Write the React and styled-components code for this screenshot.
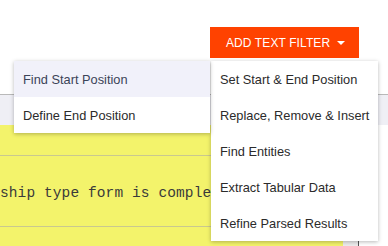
import React from "react";
import styled, { createGlobalStyle } from "styled-components";

const GlobalStyle = createGlobalStyle`
  html, body { margin: 0; padding: 0; background: #fff; }
  body { font-family: "Liberation Sans", Arial, sans-serif; }
`;

const Page = styled.div`
  position: relative;
  width: 388px;
  height: 246px;
  overflow: hidden;
`;

const Toolbar = styled.div`
  display: flex;
  justify-content: flex-end;
  padding: 27px 29px 0 0;
  height: 31px;
`;

const FilterButton = styled.button`
  display: flex;
  align-items: center;
  gap: 7px;
  width: 149px;
  height: 31px;
  padding: 0 0 0 16px;
  border: none;
  background: #ff4200;
  color: #fff;
  font-family: "Liberation Sans", Arial, sans-serif;
  font-size: 12px;
  letter-spacing: 0.1px;
  text-transform: uppercase;
`;

const Caret = styled.span`
  width: 0;
  height: 0;
  border-left: 4px solid transparent;
  border-right: 4px solid transparent;
  border-top: 4px solid #fff;
`;

const Panel = styled.div`
  margin-top: 36px;
  border-top: 1px solid #b9b9b9;
`;

const PanelHeader = styled.div`
  height: 30px;
  background: #efeff5;
`;

const DocRow = styled.div`
  display: flex;
  height: 130px;
`;

const Sheet = styled.div`
  width: 343px;
  background: #f3f36b;
  padding-top: 30px;
  overflow: hidden;
`;

const Line = styled.div`
  height: 71px;
  border-top: 1px solid #c9c88f;
  display: flex;
  align-items: center;
  padding-top: 3px;
  box-sizing: border-box;
  white-space: nowrap;
  font-family: "Liberation Mono", "Courier New", monospace;
  font-size: 14.5px;
  letter-spacing: 0.1px;
  color: #3a3a3a;
`;

const Track = styled.div`
  width: 15px;
  background: #ececec;
  border-right: 1px solid #555;
`;

const Menu = styled.ul`
  position: absolute;
  top: ${(p) => p.$top}px;
  left: ${(p) => p.$left}px;
  width: ${(p) => p.$width}px;
  margin: 0;
  padding: 0;
  list-style: none;
  background: #fff;
  box-shadow: 0 1px 4px rgba(0, 0, 0, 0.28);
`;

const Item = styled.li`
  height: 36px;
  display: flex;
  align-items: center;
  padding-left: 9px;
  font-size: 12.8px;
  color: ${(p) => (p.$active ? "#3b4458" : "#2b2b2b")};
  background: ${(p) => (p.$active ? "#f1f1fa" : "#fff")};
  white-space: nowrap;
`;

const filters = [
  "Set Start & End Position",
  "Replace, Remove & Insert",
  "Find Entities",
  "Extract Tabular Data",
  "Refine Parsed Results",
];

const positions = ["Find Start Position", "Define End Position"];

export default function App() {
  return (
    <>
      <GlobalStyle />
      <Page>
        <Toolbar>
          <FilterButton>
            Add Text Filter <Caret />
          </FilterButton>
        </Toolbar>
        <Panel>
          <PanelHeader />
          <DocRow>
            <Sheet>
              <Line>ship type form is complete</Line>
              <Line />
            </Sheet>
            <Track />
          </DocRow>
        </Panel>

        <Menu $top={61} $left={211} $width={167}>
          {filters.map((f) => (
            <Item key={f}>{f}</Item>
          ))}
        </Menu>
        <Menu $top={61} $left={14} $width={196}>
          {positions.map((p, i) => (
            <Item key={p} $active={i === 0}>
              {p}
            </Item>
          ))}
        </Menu>
      </Page>
    </>
  );
}
